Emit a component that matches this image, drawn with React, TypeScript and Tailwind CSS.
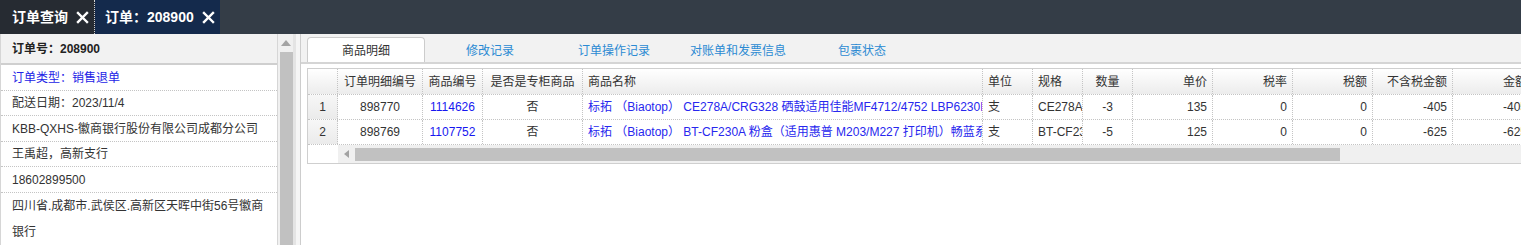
import React from "react";

const FONT = '"Liberation Sans", "Noto Sans CJK SC", sans-serif';

function CloseX() {
  return (
    <svg width="13" height="13" viewBox="0 0 13 13" className="shrink-0">
      <path d="M2 2 L11 11 M11 2 L2 11" stroke="#ffffff" strokeWidth="2.4" strokeLinecap="square" />
    </svg>
  );
}

type Col = { key: string; title: string; w: number; align: "left" | "center" | "right" };

const cols: Col[] = [
  { key: "n", title: "", w: 30, align: "center" },
  { key: "detail", title: "订单明细编号", w: 85, align: "center" },
  { key: "code", title: "商品编号", w: 60, align: "center" },
  { key: "counter", title: "是否是专柜商品", w: 100, align: "center" },
  { key: "name", title: "商品名称", w: 400, align: "left" },
  { key: "unit", title: "单位", w: 50, align: "left" },
  { key: "spec", title: "规格", w: 50, align: "left" },
  { key: "qty", title: "数量", w: 50, align: "center" },
  { key: "price", title: "单价", w: 80, align: "right" },
  { key: "rate", title: "税率", w: 80, align: "right" },
  { key: "tax", title: "税额", w: 80, align: "right" },
  { key: "net", title: "不含税金额", w: 80, align: "right" },
  { key: "amt", title: "金额", w: 80, align: "right" },
];

const rows: Record<string, string>[] = [
  {
    n: "1",
    detail: "898770",
    code: "1114626",
    counter: "否",
    name: "标拓 （Biaotop） CE278A/CRG328 硒鼓适用佳能MF4712/4752 LBP6230D 打印机 硒鼓",
    unit: "支",
    spec: "CE278A",
    qty: "-3",
    price: "135",
    rate: "0",
    tax: "0",
    net: "-405",
    amt: "-405",
  },
  {
    n: "2",
    detail: "898769",
    code: "1107752",
    counter: "否",
    name: "标拓 （Biaotop） BT-CF230A 粉盒（适用惠普 M203/M227 打印机）畅蓝系列",
    unit: "支",
    spec: "BT-CF230A",
    qty: "-5",
    price: "125",
    rate: "0",
    tax: "0",
    net: "-625",
    amt: "-625",
  },
];

const alignCls = (a: string) =>
  a === "left" ? "justify-start pl-[5px]" : a === "right" ? "justify-end pr-[5px]" : "justify-center";

function LeftPanel() {
  const rowCls = "h-[26px] flex items-center px-[11px] border-b border-dotted border-[#c4c4c4] whitespace-nowrap";
  return (
    <div className="w-[301px] shrink-0 flex h-full">
      <div className="w-[278px] shrink-0 border-l border-r border-[#d6d6d6] bg-white text-[12px] text-[#333] flex flex-col">
        <div className="h-[32px] flex items-center px-[11px] bg-[#f2f2f2] border-b-2 border-[#cfcfcf] font-bold text-[#222]">
          订单号：208900
        </div>
        <div className={rowCls + " text-[#2323e6]"}>订单类型：销售退单</div>
        <div className={rowCls}>配送日期：2023/11/4</div>
        <div className={rowCls}>KBB-QXHS-徽商银行股份有限公司成都分公司</div>
        <div className={rowCls}>王禹超，高新支行</div>
        <div className={rowCls}>18602899500</div>
        <div className="px-[11px] leading-[26px]">四川省.成都市.武侯区.高新区天晖中街56号徽商银行</div>
      </div>
      <div className="w-[15px] shrink-0 bg-[#f0f0f0] flex flex-col">
        <div className="h-[18px] flex items-center justify-center">
          <svg width="10" height="6" viewBox="0 0 10 6">
            <path d="M5 0 L10 6 L0 6 Z" fill="#a3a3a3" />
          </svg>
        </div>
        <div className="flex-1 ml-[2px] bg-[#c1c1c1]" />
      </div>
      <div className="w-[3px] shrink-0 bg-[#e4e4e4]" />
      <div className="w-[5px] shrink-0 bg-[#f5f5f5] border-r border-[#cdcdcd]" />
    </div>
  );
}

function Tabs() {
  const labels = ["修改记录", "订单操作记录", "对账单和发票信息", "包裹状态"];
  return (
    <div className="h-[30px] shrink-0 bg-[#f2f2f2] border-b-2 border-[#d5d5d5] flex items-end pl-[6px] gap-[6px] text-[12px]">
      <div className="w-[118px] h-[25px] pt-[2px] bg-white border border-b-0 border-[#cccccc] rounded-t-[4px] flex items-center justify-center text-[#333]">
        商品明细
      </div>
      {labels.map((l) => (
        <div key={l} className="w-[118px] h-[25px] pt-[2px] flex items-center justify-center text-[#2b8ad3]">
          {l}
        </div>
      ))}
    </div>
  );
}

function Grid() {
  return (
    <div className="mt-[4px] ml-[6px] border border-[#cfcfcf] w-[1300px] bg-white text-[12px]">
      <div className="flex h-[26px] border-b border-dotted border-[#c4c4c4] bg-gradient-to-b from-[#ffffff] to-[#ececec] text-[#333]">
        {cols.map((c) => (
          <div
            key={c.key}
            style={{ width: c.w }}
            className={"shrink-0 flex items-center overflow-hidden whitespace-nowrap border-r border-dotted border-[#c4c4c4] " + alignCls(c.align)}
          >
            {c.title}
          </div>
        ))}
      </div>
      {rows.map((r, i) => (
        <div key={i} className="flex h-[25px] border-b border-dotted border-[#c4c4c4] text-[#333]">
          {cols.map((c) => {
            let color = "";
            if (c.key === "code") color = " text-[#1717f0]";
            if (c.key === "name") color = " text-[#2727ee]";
            const bg = c.key === "n" ? " bg-gradient-to-b from-[#f7f7f7] to-[#ebebeb]" : "";
            return (
              <div
                key={c.key}
                style={{ width: c.w }}
                className={"shrink-0 flex items-center overflow-hidden whitespace-nowrap border-r border-dotted border-[#c4c4c4] " + alignCls(c.align) + color + bg}
              >
                {r[c.key]}
              </div>
            );
          })}
        </div>
      ))}
      <div className="flex h-[18px]">
        <div className="w-[30px] shrink-0 bg-white" />
        <div className="flex-1 bg-[#f0f0f0] flex items-center">
          <div className="w-[17px] h-full flex items-center justify-center">
            <svg width="5" height="8" viewBox="0 0 5 8">
              <path d="M0 4 L5 0 L5 8 Z" fill="#a3a3a3" />
            </svg>
          </div>
          <div className="w-[985px] h-[13px] bg-[#c1c1c1] mt-[1px]" />
        </div>
      </div>
    </div>
  );
}

export default function App() {
  return (
    <div className="w-[1521px] h-[245px] overflow-hidden flex flex-col bg-white" style={{ fontFamily: FONT }}>
      <div className="h-[34px] shrink-0 bg-[#343d47] flex text-white text-[14px] font-bold">
        <div className="w-[95px] h-full bg-[#262b32] border-r border-dotted border-[#d0d0d0] flex items-center pl-[12px] gap-[8px]">
          <span>订单查询</span>
          <CloseX />
        </div>
        <div className="w-[125px] h-full bg-[#142a4c] flex items-center pl-[10px] gap-[8px]">
          <span>订单：208900</span>
          <CloseX />
        </div>
      </div>
      <div className="flex flex-1 min-h-0">
        <LeftPanel />
        <div className="flex-1 min-w-0 overflow-hidden flex flex-col">
          <Tabs />
          <Grid />
        </div>
      </div>
    </div>
  );
}
